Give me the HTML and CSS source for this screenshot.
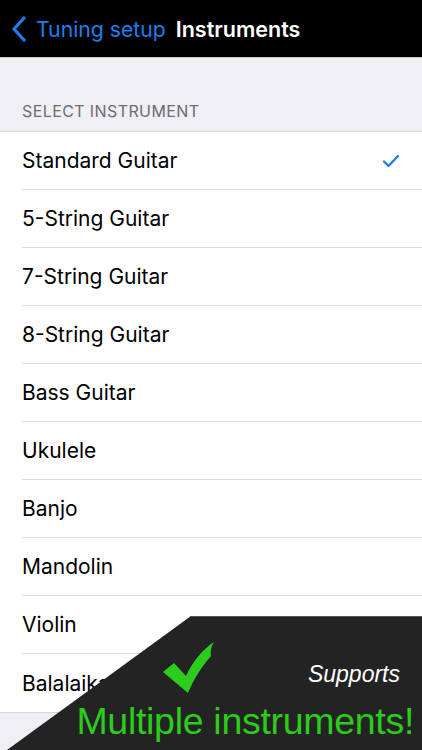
FILE: index.html
```html
<!DOCTYPE html>
<html>
<head>
<meta charset="utf-8">
<link rel="stylesheet" href="styles.css">
</head>
<body>
<div class="screen">
  <header class="navbar">
    <div class="back">
      <svg class="chev" width="18" height="26" viewBox="0 0 18 26"><path d="M14 2 L4 13 L14 24" fill="none" stroke="#1b7ff0" stroke-width="3.2" stroke-linecap="round" stroke-linejoin="round"/></svg>
      <span class="back-label">Tuning setup</span>
    </div>
    <span class="title">Instruments</span>
  </header>
  <div class="section-header">SELECT INSTRUMENT</div>
  <ul class="list">
    <li class="row"><span>Standard Guitar</span>
      <svg class="tick" width="18" height="14" viewBox="0 0 18 14"><path d="M2 7.5 L6.5 12 L16 2" fill="none" stroke="#1b7ff0" stroke-width="2.4" stroke-linecap="round" stroke-linejoin="round"/></svg>
    </li>
    <li class="row"><span>5-String Guitar</span></li>
    <li class="row"><span>7-String Guitar</span></li>
    <li class="row"><span>8-String Guitar</span></li>
    <li class="row"><span>Bass Guitar</span></li>
    <li class="row"><span>Ukulele</span></li>
    <li class="row"><span>Banjo</span></li>
    <li class="row"><span>Mandolin</span></li>
    <li class="row"><span>Violin</span></li>
    <li class="row"><span>Balalaika</span></li>
  </ul>
  <div class="footer-space"></div>
  <div class="promo">
    <svg class="big-check" width="56" height="56" viewBox="160 638 56 56"><path d="M163 671 L174 662 L186 675 C193 660 203 648 214 641 C211 646 210 650 211 655 C203 664 194 677 188 692 Z" fill="#2ccc1c"/></svg>
    <span class="supports">Supports</span>
    <span class="multi">Multiple instruments!</span>
  </div>
</div>
</body>
</html>
```
FILE: styles.css
```css
* { box-sizing: border-box; }
html, body { margin: 0; padding: 0; }
body {
  font-family: "Inter", "Liberation Sans", sans-serif;
  background: #efeff4;
  width: 422px;
  height: 750px;
  overflow: hidden;
}
.screen {
  position: relative;
  width: 422px;
  height: 750px;
  overflow: hidden;
  background: #efeff4;
}
.navbar {
  height: 58px;
  background: #000;
  display: flex;
  align-items: center;
  padding-left: 10px;
  border-bottom: 1px solid #c8c7cc;
}
.back {
  display: flex;
  align-items: center;
}
.chev { margin-right: 8px; margin-top: 1px; }
.back-label {
  color: #1b7ff0;
  font-size: 21.2px;
}
.title {
  color: #fff;
  font-size: 21.5px;
  font-weight: 600;
  margin-left: 10px;
}
.section-header {
  height: 73px;
  padding: 0 22px 10px;
  display: flex;
  align-items: flex-end;
  color: #6d6d72;
  font-size: 16px;
  letter-spacing: 0.4px;
}
.list {
  list-style: none;
  margin: 0;
  padding: 0;
  background: #fff;
  border-top: 1px solid #d8d8dc;
  border-bottom: 1px solid #d8d8dc;
}
.row {
  height: 58px;
  margin-left: 22px;
  padding-right: 22px;
  display: flex;
  align-items: center;
  justify-content: space-between;
  font-size: 21px;
  color: #000;
  border-bottom: 1px solid #dcdce0;
}
.row:last-child { border-bottom: none; }
.footer-space { height: 40px; }
.promo {
  position: absolute;
  left: 0;
  top: 616px;
  width: 422px;
  height: 134px;
  background: #232323;
  clip-path: polygon(191px 0, 422px 0, 422px 134px, 7px 134px);
  border-top: 1px solid #555;
  font-family: "Liberation Sans", Arial, sans-serif;
}
.big-check {
  position: absolute;
  left: 160px;
  top: 22px;
}
.supports {
  position: absolute;
  right: 22px;
  top: 44px;
  color: #fff;
  font-style: italic;
  font-size: 23px;
}
.multi {
  position: absolute;
  right: 8px;
  top: 83px;
  color: #2ccc1c;
  font-size: 37.5px;
  letter-spacing: -0.3px;
}
```
